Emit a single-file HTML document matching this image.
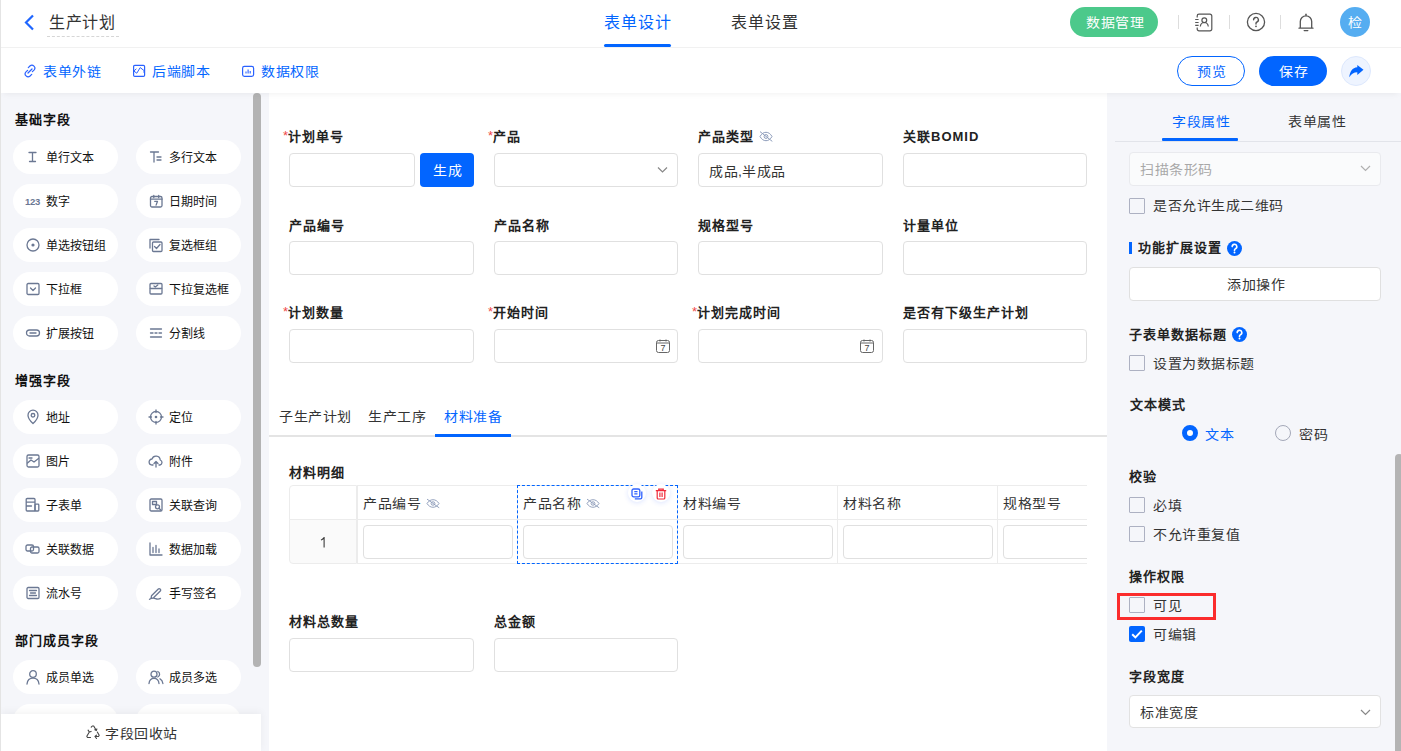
<!DOCTYPE html>
<html lang="zh-CN">
<head>
<meta charset="utf-8">
<title>生产计划 - 表单设计</title>
<style>
*{box-sizing:border-box;margin:0;padding:0}
html,body{width:1401px;height:751px;overflow:hidden;background:#fff}
body{font-family:"Liberation Sans",sans-serif;color:#333;position:relative;font-size:14px}
.abs{position:absolute}
.abs>svg{display:block}
.txt{position:absolute;white-space:nowrap;line-height:1}
/* header */
#leftline{position:absolute;left:0;top:0;width:1px;height:751px;background:#e4e4e4;z-index:50}
#hdr{position:absolute;left:0;top:0;width:1401px;height:48px;border-bottom:1px solid #f1f1f1;background:#fff}
#bar2{position:absolute;left:0;top:48px;width:1401px;height:45px;background:#fff;z-index:5;box-shadow:0 4px 6px -3px rgba(0,0,0,.06)}
.blue{color:#0265ff}
/* left panel */
#lp{position:absolute;left:0;top:93px;width:269px;height:658px;background:#f5f6fa;overflow:hidden}
.sec{position:absolute;left:15px;font-size:13px;letter-spacing:1px;font-weight:bold;color:#111;line-height:1}
.pill{position:absolute;width:105px;height:34px;border-radius:17px;background:#fff}
.pill .ic{position:absolute;left:12px;top:9px;width:16px;height:16px}
.pill .t{position:absolute;left:33px;top:12px;font-size:12px;line-height:12px;color:#111;white-space:nowrap}
#lscroll{position:absolute;left:253px;top:0;width:8px;height:574px;border-radius:4px;background:#b3b3b3}
#recycle{position:absolute;left:1px;top:621px;width:260px;height:37px;background:#fff;box-shadow:0 -2px 8px rgba(0,0,0,.05)}
/* canvas */
#cv{position:absolute;left:269px;top:93px;width:838px;height:658px;background:#fff;overflow:hidden}
.lbl{position:absolute;font-size:13px;letter-spacing:1px;font-weight:bold;color:#222;line-height:1;white-space:nowrap}
.lbl .req{color:#f04848;font-weight:normal;font-size:13px;letter-spacing:1px;letter-spacing:0;position:relative;top:-1px}
.inp{position:absolute;height:34px;border:1px solid #e0e0e0;border-radius:4px;background:#fff}
/* right panel */
#rp{position:absolute;left:1107px;top:93px;width:294px;height:658px;background:#f5f6fa;overflow:hidden}
.rsec{position:absolute;left:22px;font-size:13px;letter-spacing:1px;font-weight:bold;color:#222;line-height:1;white-space:nowrap}
.cb{position:absolute;left:22px;width:16px;height:16px;border:1px solid #c8c8c8;border-radius:2px;background:#fff}
.cbt{position:absolute;left:46px;font-size:13px;letter-spacing:1px;color:#333;line-height:1;white-space:nowrap}
</style>
</head>
<body>
<div id="leftline"></div>

<!-- ===== Header ===== -->
<div id="hdr">
  <svg class="abs" style="left:23px;top:14px" width="12" height="17" viewBox="0 0 12 17"><path d="M10 1.5 L3 8.5 L10 15.5" fill="none" stroke="#1f66ff" stroke-width="2.2"/></svg>
  <div class="txt" style="left:49px;top:15px;font-size:16px;color:#333;letter-spacing:.6px">生产计划</div>
  <div class="abs" style="left:47px;top:36px;width:72px;border-top:1px dashed #d6d6d6"></div>

  <div class="txt" style="left:604px;top:15px;font-size:16px;color:#0265ff;letter-spacing:1px">表单设计</div>
  <div class="abs" style="left:604px;top:44px;width:67px;height:3px;border-radius:2px;background:#0265ff"></div>
  <div class="txt" style="left:731px;top:15px;font-size:16px;color:#333;letter-spacing:1px">表单设置</div>

  <div class="abs" style="left:1070px;top:7px;width:88px;height:30px;border-radius:15px;background:#4cc98b"></div>
  <div class="txt" style="left:1086px;top:15px;font-size:14px;letter-spacing:.5px;transform:scaleY(.9);transform-origin:0 50%;color:#fff;font-weight:500">数据管理</div>
  <div class="abs" style="left:1178px;top:15px;width:1px;height:14px;background:#ddd"></div>
  <div class="abs" style="left:1229px;top:15px;width:1px;height:14px;background:#ddd"></div>
  <div class="abs" style="left:1280px;top:15px;width:1px;height:14px;background:#ddd"></div>
  <svg class="abs" style="left:1194px;top:13px" width="20" height="19" viewBox="0 0 20 19"><path d="M3.2 4.5V3a1.8 1.8 0 0 1 1.8-1.8h11a1.8 1.8 0 0 1 1.8 1.8v13a1.8 1.8 0 0 1-1.8 1.8H5a1.8 1.8 0 0 1-1.8-1.8v-1.5" fill="none" stroke="#555" stroke-width="1.2"/><path d="M1.2 6.5h3.4M1.2 9.5h3.4M1.2 12.3h3.4" stroke="#555" stroke-width="1.2"/><circle cx="10.3" cy="7.3" r="2.4" fill="none" stroke="#555" stroke-width="1.2"/><path d="M6.3 13.5c.3-2.5 1.9-4 4-4s3.7 1.5 4 4" fill="none" stroke="#555" stroke-width="1.2"/></svg>
  <svg class="abs" style="left:1246px;top:12px" width="20" height="20" viewBox="0 0 20 20"><circle cx="10" cy="10" r="8.6" fill="none" stroke="#555" stroke-width="1.3"/><path d="M7.6 7.8a2.4 2.4 0 1 1 3.4 2.2c-.7.3-1 .8-1 1.5v.6" fill="none" stroke="#555" stroke-width="1.4" stroke-linecap="round"/><circle cx="10" cy="14.3" r=".9" fill="#555"/></svg>
  <svg class="abs" style="left:1298px;top:13px" width="16" height="19" viewBox="0 0 16 19"><path d="M8 1.2v1" stroke="#555" stroke-width="1.4" stroke-linecap="round"/><path d="M2.3 15V8.5a5.7 5.7 0 0 1 11.4 0V15M1 15.2h14" fill="none" stroke="#555" stroke-width="1.3" stroke-linecap="round"/><path d="M6.2 17.6h3.6" stroke="#555" stroke-width="1.4" stroke-linecap="round"/></svg>
  <div class="abs" style="left:1340px;top:7px;width:30px;height:30px;border-radius:15px;background:#55adf1"></div>
  <div class="txt" style="left:1348px;top:15px;font-size:14px;letter-spacing:.5px;transform:scaleY(.9);transform-origin:0 50%;color:#fff">检</div>
</div>

<!-- ===== Toolbar 2 ===== -->
<div id="bar2">
  <svg class="abs" style="left:23px;top:16px" width="14" height="14" viewBox="0 0 14 14"><path d="M5.3 3.6l1.6-1.6a2.9 2.9 0 0 1 4.1 4.1L9.4 7.7M8.7 10.4l-1.6 1.6a2.9 2.9 0 0 1-4.1-4.1l1.6-1.6M5 9l4-4" fill="none" stroke="#2a62ff" stroke-width="1.2" stroke-linecap="round"/></svg>
  <svg class="abs" style="left:132px;top:16px" width="14" height="14" viewBox="0 0 14 14"><rect x="1.6" y="1.4" width="11" height="11" rx="1.2" fill="none" stroke="#2a62ff" stroke-width="1.2"/><path d="M1.8 7l2.6-2.2M1.8 7l3 2.2 3.4-5.6 4.4 3.4-1.5 1.3" fill="none" stroke="#2a62ff" stroke-width="1"/></svg>
  <svg class="abs" style="left:241px;top:16px" width="14" height="14" viewBox="0 0 14 14"><rect x="1.6" y="2.4" width="11" height="10" rx="1.8" fill="none" stroke="#2a62ff" stroke-width="1.2"/><path d="M5 7.6v2M7.1 5.5v4.1M9.2 7v2.6" stroke="#2a62ff" stroke-width="1.1"/></svg>
  <div class="txt blue" style="left:43px;top:17px;font-size:14px;letter-spacing:.5px;transform:scaleY(.9);transform-origin:0 50%">表单外链</div>
  <div class="txt blue" style="left:152px;top:17px;font-size:14px;letter-spacing:.5px;transform:scaleY(.9);transform-origin:0 50%">后端脚本</div>
  <div class="txt blue" style="left:261px;top:17px;font-size:14px;letter-spacing:.5px;transform:scaleY(.9);transform-origin:0 50%">数据权限</div>

  <div class="abs" style="left:1177px;top:8px;width:68px;height:30px;border-radius:15px;border:1px solid #0265ff"></div>
  <div class="txt blue" style="left:1197px;top:17px;font-size:14px;letter-spacing:.5px;transform:scaleY(.9);transform-origin:0 50%">预览</div>
  <div class="abs" style="left:1259px;top:8px;width:68px;height:30px;border-radius:15px;background:#0265ff"></div>
  <div class="txt" style="left:1279px;top:17px;font-size:14px;letter-spacing:.5px;transform:scaleY(.9);transform-origin:0 50%;color:#fff;font-weight:500">保存</div>
  <div class="abs" style="left:1341px;top:8px;width:30px;height:30px;border-radius:15px;background:#eef4ff;border:1px solid #dde8fd"></div>
  <svg class="abs" style="left:1349px;top:17px" width="15" height="13" viewBox="0 0 15 13"><path d="M8.3 0L14.5 4.8 8.3 10V7.3C4.8 7.3 2.4 9 0.3 12.2 0.7 6.6 3.4 2.6 8.3 2.2z" fill="#0265ff"/></svg>
</div>

<!-- ===== Left panel ===== -->
<div id="lp">
  <div class="sec" style="top:20px">基础字段</div>
  <div class="sec" style="top:281px">增强字段</div>
  <div class="sec" style="top:541px">部门成员字段</div>
  <div class="pill" style="left:13px;top:47px"><svg class="ic" viewBox="0 0 16 16"><path d="M4 3.5h7M7.5 3.5v9M4.5 12.5h6" fill="none" stroke="#6b7893" stroke-width="1.3" stroke-linecap="round" stroke-linejoin="round"/></svg><span class="t">单行文本</span></div>
  <div class="pill" style="left:136px;top:47px"><svg class="ic" viewBox="0 0 16 16"><path d="M2.5 3h8M6 3v10M9 8h4M9 11h4" fill="none" stroke="#6b7893" stroke-width="1.3" stroke-linecap="round" stroke-linejoin="round"/></svg><span class="t">多行文本</span></div>
  <div class="pill" style="left:13px;top:91px"><svg class="ic" viewBox="0 0 16 16"><text x="0" y="11.5" font-family="Liberation Sans" font-weight="bold" font-size="9.5" letter-spacing="-0.3" fill="#6b7893">123</text></svg><span class="t">数字</span></div>
  <div class="pill" style="left:136px;top:91px"><svg class="ic" viewBox="0 0 16 16"><rect x="2.5" y="3.5" width="11.5" height="10.5" rx="1.5" fill="none" stroke="#6b7893" stroke-width="1.3" stroke-linecap="round" stroke-linejoin="round"/><path d="M2.5 6.2h11.5M5.8 2.5v2M10.7 2.5v2M6.7 8.3h2.8l-1.4 3.8" fill="none" stroke="#6b7893" stroke-width="1.3" stroke-linecap="round" stroke-linejoin="round"/></svg><span class="t">日期时间</span></div>
  <div class="pill" style="left:13px;top:135px"><svg class="ic" viewBox="0 0 16 16"><circle cx="8" cy="8" r="6" fill="none" stroke="#6b7893" stroke-width="1.3" stroke-linecap="round" stroke-linejoin="round"/><circle cx="8" cy="8" r="1.6" fill="#6b7893"/></svg><span class="t">单选按钮组</span></div>
  <div class="pill" style="left:136px;top:135px"><svg class="ic" viewBox="0 0 16 16"><path d="M2 11V2.5h9" fill="none" stroke="#6b7893" stroke-width="1.3" stroke-linecap="round" stroke-linejoin="round"/><rect x="4.5" y="5" width="9.5" height="9.5" rx="1" fill="none" stroke="#6b7893" stroke-width="1.3" stroke-linecap="round" stroke-linejoin="round"/><path d="M6.5 9.5l2 2 3.5-4" fill="none" stroke="#6b7893" stroke-width="1.3" stroke-linecap="round" stroke-linejoin="round"/></svg><span class="t">复选框组</span></div>
  <div class="pill" style="left:13px;top:179px"><svg class="ic" viewBox="0 0 16 16"><rect x="2" y="2.5" width="12" height="11" rx="1.2" fill="none" stroke="#6b7893" stroke-width="1.3" stroke-linecap="round" stroke-linejoin="round"/><path d="M5.5 7l2.5 2.5 2.5-2.5" fill="none" stroke="#6b7893" stroke-width="1.3" stroke-linecap="round" stroke-linejoin="round"/></svg><span class="t">下拉框</span></div>
  <div class="pill" style="left:136px;top:179px"><svg class="ic" viewBox="0 0 16 16"><rect x="2" y="2.5" width="12" height="5" rx="1" fill="none" stroke="#6b7893" stroke-width="1.3" stroke-linecap="round" stroke-linejoin="round"/><path d="M2 7.5v4.5a1 1 0 0 0 1 1h10a1 1 0 0 0 1-1V7.5M6 5l1.3 1 2.5-2" fill="none" stroke="#6b7893" stroke-width="1.3" stroke-linecap="round" stroke-linejoin="round"/></svg><span class="t">下拉复选框</span></div>
  <div class="pill" style="left:13px;top:223px"><svg class="ic" viewBox="0 0 16 16"><rect x="1.5" y="5" width="13" height="6" rx="3" fill="none" stroke="#6b7893" stroke-width="1.3" stroke-linecap="round" stroke-linejoin="round"/><path d="M5 8h6" fill="none" stroke="#6b7893" stroke-width="1.3" stroke-linecap="round" stroke-linejoin="round"/></svg><span class="t">扩展按钮</span></div>
  <div class="pill" style="left:136px;top:223px"><svg class="ic" viewBox="0 0 16 16"><path d="M2.5 4h11M2.5 8h2.5M7 8h2M11 8h2.5M2.5 12h11" fill="none" stroke="#6b7893" stroke-width="1.3" stroke-linecap="round" stroke-linejoin="round"/></svg><span class="t">分割线</span></div>
  <div class="pill" style="left:13px;top:307px"><svg class="ic" viewBox="0 0 16 16"><path d="M8 14.5s5-4.6 5-8.3a5 5 0 0 0-10 0c0 3.7 5 8.3 5 8.3z" fill="none" stroke="#6b7893" stroke-width="1.3" stroke-linecap="round" stroke-linejoin="round"/><circle cx="8" cy="6.3" r="1.8" fill="none" stroke="#6b7893" stroke-width="1.3" stroke-linecap="round" stroke-linejoin="round"/></svg><span class="t">地址</span></div>
  <div class="pill" style="left:136px;top:307px"><svg class="ic" viewBox="0 0 16 16"><circle cx="8" cy="8" r="5.5" fill="none" stroke="#6b7893" stroke-width="1.3" stroke-linecap="round" stroke-linejoin="round"/><circle cx="8" cy="8" r="1.3" fill="#6b7893"/><path d="M8 1v2.5M8 12.5V15M1 8h2.5M12.5 8H15" fill="none" stroke="#6b7893" stroke-width="1.3" stroke-linecap="round" stroke-linejoin="round"/></svg><span class="t">定位</span></div>
  <div class="pill" style="left:13px;top:351px"><svg class="ic" viewBox="0 0 16 16"><rect x="2" y="2" width="12" height="12" rx="1.5" fill="none" stroke="#6b7893" stroke-width="1.3" stroke-linecap="round" stroke-linejoin="round"/><path d="M2.5 10l3.5-3 3 2 4.5-3.5M4 5h3" fill="none" stroke="#6b7893" stroke-width="1.3" stroke-linecap="round" stroke-linejoin="round"/></svg><span class="t">图片</span></div>
  <div class="pill" style="left:136px;top:351px"><svg class="ic" viewBox="0 0 16 16"><path d="M5 12H4.2a3 3 0 0 1-.2-6 4.2 4.2 0 0 1 8.2 1A2.6 2.6 0 0 1 12 12h-1M8 14V8.5M6 10.5l2-2 2 2" fill="none" stroke="#6b7893" stroke-width="1.3" stroke-linecap="round" stroke-linejoin="round"/></svg><span class="t">附件</span></div>
  <div class="pill" style="left:13px;top:395px"><svg class="ic" viewBox="0 0 16 16"><path d="M10 14H2.2a1 1 0 0 1-1-1V2.5a1 1 0 0 1 1-1H9a1 1 0 0 1 1 1V14M1.5 5.2h8.2M1.5 9h5" fill="none" stroke="#6b7893" stroke-width="1.3" stroke-linecap="round" stroke-linejoin="round"/><rect x="10" y="7.2" width="3.8" height="6.8" rx=".8" fill="none" stroke="#6b7893" stroke-width="1.3" stroke-linecap="round" stroke-linejoin="round"/></svg><span class="t">子表单</span></div>
  <div class="pill" style="left:136px;top:395px"><svg class="ic" viewBox="0 0 16 16"><rect x="2" y="2" width="12" height="12" rx="1.2" fill="none" stroke="#6b7893" stroke-width="1.3" stroke-linecap="round" stroke-linejoin="round"/><path d="M4.5 4.5h4v3h-4z" fill="none" stroke="#6b7893" stroke-width="1.3" stroke-linecap="round" stroke-linejoin="round"/><circle cx="9.5" cy="9.8" r="2" fill="none" stroke="#6b7893" stroke-width="1.3" stroke-linecap="round" stroke-linejoin="round"/><path d="M11 11.3l2 2" fill="none" stroke="#6b7893" stroke-width="1.3" stroke-linecap="round" stroke-linejoin="round"/></svg><span class="t">关联查询</span></div>
  <div class="pill" style="left:13px;top:439px"><svg class="ic" viewBox="0 0 16 16"><rect x="1" y="4" width="7.5" height="6" rx="1.5" fill="none" stroke="#6b7893" stroke-width="1.3" stroke-linecap="round" stroke-linejoin="round"/><rect x="5.5" y="6" width="8.5" height="6" rx="1.5" fill="none" stroke="#6b7893" stroke-width="1.3" stroke-linecap="round" stroke-linejoin="round"/></svg><span class="t">关联数据</span></div>
  <div class="pill" style="left:136px;top:439px"><svg class="ic" viewBox="0 0 16 16"><path d="M2 2v12h12M5 6.5v5M8 4.5v7M11 8v3.5" fill="none" stroke="#6b7893" stroke-width="1.3" stroke-linecap="round" stroke-linejoin="round"/></svg><span class="t">数据加载</span></div>
  <div class="pill" style="left:13px;top:483px"><svg class="ic" viewBox="0 0 16 16"><rect x="2" y="2.5" width="12" height="11" rx="1.2" fill="none" stroke="#6b7893" stroke-width="1.3" stroke-linecap="round" stroke-linejoin="round"/><path d="M4.5 5.5h7M5.5 8h5M4.5 10.5h7" fill="none" stroke="#6b7893" stroke-width="1.3" stroke-linecap="round" stroke-linejoin="round"/></svg><span class="t">流水号</span></div>
  <div class="pill" style="left:136px;top:483px"><svg class="ic" viewBox="0 0 16 16"><path d="M3.5 10.8l6.8-6.8a1.2 1.2 0 0 1 1.7 0l.3.3a1.2 1.2 0 0 1 0 1.7L5.5 12.8 3 13.3zM1.5 14.3c2-1.2 4-1.5 6-.7s3.5.6 5-.2" fill="none" stroke="#6b7893" stroke-width="1.3" stroke-linecap="round" stroke-linejoin="round"/></svg><span class="t">手写签名</span></div>
  <div class="pill" style="left:13px;top:567px"><svg class="ic" viewBox="0 0 16 16"><circle cx="8" cy="5" r="3.3" fill="none" stroke="#6b7893" stroke-width="1.3" stroke-linecap="round" stroke-linejoin="round"/><path d="M2 15c.4-3.6 2.8-5.8 6-5.8s5.6 2.2 6 5.8" fill="none" stroke="#6b7893" stroke-width="1.3" stroke-linecap="round" stroke-linejoin="round"/></svg><span class="t">成员单选</span></div>
  <div class="pill" style="left:136px;top:567px"><svg class="ic" viewBox="0 0 16 16"><circle cx="6" cy="5.2" r="3" fill="none" stroke="#6b7893" stroke-width="1.3" stroke-linecap="round" stroke-linejoin="round"/><path d="M1 14.5c.3-3.2 2.3-5.2 5-5.2s4.7 2 5 5.2M9.8 2.5a3 3 0 0 1 0 5.5M12 9.8c1.6.8 2.6 2.5 2.9 4.7" fill="none" stroke="#6b7893" stroke-width="1.3" stroke-linecap="round" stroke-linejoin="round"/></svg><span class="t">成员多选</span></div>
  <div class="pill" style="left:13px;top:611px"></div>
  <div class="pill" style="left:136px;top:611px"></div>
  <div id="lscroll"></div>
  <div id="recycle"><svg class="abs" style="left:84px;top:11px" width="16" height="15" viewBox="0 0 16 15"><path d="M6.2 2.2L7.3 1h1.4l2.6 4.5M12.3 7l1.9 3.3-.7 1.2H10M5.5 12.5H2.5l-.7-1.2L4.3 7M9.8 4.8l1.5.7.6-1.6M11.5 13.5l-1.5-2 1.5-1.3M3.1 5.1l1.2 1.9 1.8-.6" fill="none" stroke="#444" stroke-width="1.1" stroke-linecap="round" stroke-linejoin="round"/></svg><span class="txt" style="left:104px;top:12px;font-size:14px;letter-spacing:.5px;transform:scaleY(.9);transform-origin:0 50%;color:#333">字段回收站</span></div>
</div>

<!-- ===== Canvas ===== -->
<div id="cv">
  <div class="lbl" style="left:14px;top:37px"><span class="req">*</span>计划单号</div>
  <div class="lbl" style="left:219px;top:37px"><span class="req">*</span>产品</div>
  <div class="lbl" style="left:429px;top:37px">产品类型<span style="display:inline-block;margin-left:5px;vertical-align:-1px"><svg width="14" height="11" viewBox="0 0 14 11"><path d="M1 5.5C2.6 2.7 4.6 1.3 7 1.3s4.4 1.4 6 4.2c-1.6 2.8-3.6 4.2-6 4.2S2.6 8.3 1 5.5z" fill="none" stroke="#8e9dbb" stroke-width="1"/><circle cx="7" cy="5.5" r="1.9" fill="none" stroke="#8e9dbb" stroke-width="1"/><path d="M1 0.6l12.3 9.8" stroke="#8e9dbb" stroke-width="1"/></svg></span></div>
  <div class="lbl" style="left:634px;top:37px">关联BOMID</div>
  <div class="lbl" style="left:20px;top:126px">产品编号</div>
  <div class="lbl" style="left:225px;top:126px">产品名称</div>
  <div class="lbl" style="left:429px;top:126px">规格型号</div>
  <div class="lbl" style="left:634px;top:126px">计量单位</div>
  <div class="lbl" style="left:14px;top:213px"><span class="req">*</span>计划数量</div>
  <div class="lbl" style="left:219px;top:213px"><span class="req">*</span>开始时间</div>
  <div class="lbl" style="left:423px;top:213px"><span class="req">*</span>计划完成时间</div>
  <div class="lbl" style="left:634px;top:213px">是否有下级生产计划</div>
  <div class="inp" style="left:20px;top:60px;width:126px"></div>
  <div class="abs" style="left:151px;top:60px;width:54px;height:34px;border-radius:4px;background:#0265ff"></div>
  <div class="txt" style="left:164px;top:71px;font-size:14px;letter-spacing:.5px;transform:scaleY(.9);transform-origin:0 50%;color:#fff">生成</div>
  <div class="inp" style="left:225px;top:60px;width:184px"></div>
  <svg class="abs" style="left:388px;top:73px" width="11" height="8" viewBox="0 0 11 8"><path d="M1 1.5l4.5 4.5 4.5-4.5" fill="none" stroke="#888" stroke-width="1.2"/></svg>
  <div class="inp" style="left:429px;top:60px;width:185px"></div>
  <div class="txt" style="left:440px;top:72px;font-size:14px;letter-spacing:.5px;transform:scaleY(.9);transform-origin:0 50%;color:#333">成品,半成品</div>
  <div class="inp" style="left:634px;top:60px;width:184px"></div>
  <div class="inp" style="left:20px;top:148px;width:185px"></div>
  <div class="inp" style="left:225px;top:148px;width:184px"></div>
  <div class="inp" style="left:429px;top:148px;width:185px"></div>
  <div class="inp" style="left:634px;top:148px;width:184px"></div>
  <div class="inp" style="left:20px;top:236px;width:185px"></div>
  <div class="inp" style="left:225px;top:236px;width:184px"></div>
  <div class="abs" style="left:387px;top:246px;width:14px;height:14px"><svg width="14" height="14" viewBox="0 0 14 14"><rect x="0.5" y="1.5" width="13" height="12" rx="2" fill="none" stroke="#666" stroke-width="1"/><path d="M0.5 4h13M4 0.5v2M10 0.5v2" stroke="#666" stroke-width="1"/><text x="7" y="12" text-anchor="middle" font-family="Liberation Sans" font-size="9" fill="#444">7</text></svg></div>
  <div class="inp" style="left:429px;top:236px;width:185px"></div>
  <div class="abs" style="left:591px;top:246px;width:14px;height:14px"><svg width="14" height="14" viewBox="0 0 14 14"><rect x="0.5" y="1.5" width="13" height="12" rx="2" fill="none" stroke="#666" stroke-width="1"/><path d="M0.5 4h13M4 0.5v2M10 0.5v2" stroke="#666" stroke-width="1"/><text x="7" y="12" text-anchor="middle" font-family="Liberation Sans" font-size="9" fill="#444">7</text></svg></div>
  <div class="inp" style="left:634px;top:236px;width:184px"></div>
  <div class="txt" style="left:10px;top:316px;font-size:14px;letter-spacing:.5px;transform:scaleY(.9);transform-origin:0 50%;color:#333">子生产计划</div>
  <div class="txt" style="left:99px;top:316px;font-size:14px;letter-spacing:.5px;transform:scaleY(.9);transform-origin:0 50%;color:#333">生产工序</div>
  <div class="txt" style="left:175px;top:316px;font-size:14px;letter-spacing:.5px;transform:scaleY(.9);transform-origin:0 50%;color:#0265ff">材料准备</div>
  <div class="abs" style="left:0;top:342px;width:838px;height:2px;background:#e4e4e4"></div>
  <div class="abs" style="left:166px;top:341px;width:76px;height:3px;background:#0265ff"></div>
  <div class="lbl" style="left:20px;top:373px">材料明细</div>
  <div class="abs" style="left:20px;top:392px;width:798px;height:79px;overflow:hidden"><div class="abs" style="left:0;top:0;width:68px;height:35px;border:1px solid #ececec;border-radius:4px 0 0 0"></div><div class="abs" style="left:0;top:34px;width:68px;height:45px;border:1px solid #ececec;background:#fafafa;border-radius:0 0 0 4px"></div><svg class="abs" style="left:31px;top:52px" width="6" height="11" viewBox="0 0 6 11"><path d="M1 3.1C2.2 2.5 3.3 1.7 4.1 0.6V10.5" fill="none" stroke="#333" stroke-width="1.05"/></svg><div class="abs" style="left:68px;top:0;width:161px;height:35px;border:1px solid #ececec"></div><div class="abs" style="left:68px;top:34px;width:161px;height:45px;border:1px solid #ececec"></div><div class="txt" style="left:74px;top:11px;font-size:14px;letter-spacing:.5px;transform:scaleY(.9);transform-origin:0 50%;color:#333">产品编号<span style="display:inline-block;margin-left:5px;vertical-align:-1px"><svg width="14" height="11" viewBox="0 0 14 11"><path d="M1 5.5C2.6 2.7 4.6 1.3 7 1.3s4.4 1.4 6 4.2c-1.6 2.8-3.6 4.2-6 4.2S2.6 8.3 1 5.5z" fill="none" stroke="#8e9dbb" stroke-width="1"/><circle cx="7" cy="5.5" r="1.9" fill="none" stroke="#8e9dbb" stroke-width="1"/><path d="M1 0.6l12.3 9.8" stroke="#8e9dbb" stroke-width="1"/></svg></span></div><div class="inp" style="left:74px;top:40px;width:150px"></div><div class="abs" style="left:228px;top:0;width:161px;height:35px;border:1px solid #ececec"></div><div class="abs" style="left:228px;top:34px;width:161px;height:45px;border:1px solid #ececec"></div><div class="txt" style="left:234px;top:11px;font-size:14px;letter-spacing:.5px;transform:scaleY(.9);transform-origin:0 50%;color:#333">产品名称<span style="display:inline-block;margin-left:5px;vertical-align:-1px"><svg width="14" height="11" viewBox="0 0 14 11"><path d="M1 5.5C2.6 2.7 4.6 1.3 7 1.3s4.4 1.4 6 4.2c-1.6 2.8-3.6 4.2-6 4.2S2.6 8.3 1 5.5z" fill="none" stroke="#8e9dbb" stroke-width="1"/><circle cx="7" cy="5.5" r="1.9" fill="none" stroke="#8e9dbb" stroke-width="1"/><path d="M1 0.6l12.3 9.8" stroke="#8e9dbb" stroke-width="1"/></svg></span></div><div class="inp" style="left:234px;top:40px;width:150px"></div><div class="abs" style="left:388px;top:0;width:161px;height:35px;border:1px solid #ececec"></div><div class="abs" style="left:388px;top:34px;width:161px;height:45px;border:1px solid #ececec"></div><div class="txt" style="left:394px;top:11px;font-size:14px;letter-spacing:.5px;transform:scaleY(.9);transform-origin:0 50%;color:#333">材料编号</div><div class="inp" style="left:394px;top:40px;width:150px"></div><div class="abs" style="left:548px;top:0;width:161px;height:35px;border:1px solid #ececec"></div><div class="abs" style="left:548px;top:34px;width:161px;height:45px;border:1px solid #ececec"></div><div class="txt" style="left:554px;top:11px;font-size:14px;letter-spacing:.5px;transform:scaleY(.9);transform-origin:0 50%;color:#333">材料名称</div><div class="inp" style="left:554px;top:40px;width:150px"></div><div class="abs" style="left:708px;top:0;width:161px;height:35px;border:1px solid #ececec"></div><div class="abs" style="left:708px;top:34px;width:161px;height:45px;border:1px solid #ececec"></div><div class="txt" style="left:714px;top:11px;font-size:14px;letter-spacing:.5px;transform:scaleY(.9);transform-origin:0 50%;color:#333">规格型号</div><div class="inp" style="left:714px;top:40px;width:150px"></div></div>
  <div class="abs" style="left:248px;top:392px;width:161px;height:79px;border:1px dashed #0265ff"></div>
  <div class="abs" style="left:359px;top:391px;width:18px;height:18px;border-radius:9px;background:#fff;box-shadow:0 1px 5px rgba(40,90,255,.16)"><div class="abs" style="left:3px;top:4px"><svg width="12" height="12" viewBox="0 0 12 12"><rect x="1" y="1" width="7.8" height="7.8" rx="1.6" fill="none" stroke="#2f62ff" stroke-width="1.3"/><path d="M3.3 3.6h3.2M3.3 5.9h3.2" stroke="#2f62ff" stroke-width="1.2"/><path d="M10.8 3.6v5.8a1.4 1.4 0 0 1-1.4 1.4H3.8" fill="none" stroke="#2f62ff" stroke-width="1.3"/></svg></div></div>
  <div class="abs" style="left:383px;top:391px;width:18px;height:18px;border-radius:9px;background:#fff;box-shadow:0 1px 5px rgba(40,90,255,.16)"><div class="abs" style="left:3px;top:4px"><svg width="12" height="12" viewBox="0 0 12 12"><path d="M0.8 2.6h10.4M3.8 2.6V1.2h4.4v1.4" fill="none" stroke="#f0283a" stroke-width="1.3"/><path d="M2.2 2.8v7.2a1 1 0 0 0 1 1h5.6a1 1 0 0 0 1-1V2.8M4.9 4.6v4.4M7.1 4.6v4.4" fill="none" stroke="#f0283a" stroke-width="1.2"/></svg></div></div>
  <div class="lbl" style="left:20px;top:522px">材料总数量</div>
  <div class="lbl" style="left:225px;top:522px">总金额</div>
  <div class="inp" style="left:20px;top:545px;width:185px"></div>
  <div class="inp" style="left:225px;top:545px;width:184px"></div>
</div>

<!-- ===== Right panel ===== -->
<div id="rp">
  <div class="txt" style="left:65px;top:22px;font-size:14px;letter-spacing:.5px;transform:scaleY(.9);transform-origin:0 50%;color:#0265ff">字段属性</div>
  <div class="txt" style="left:181px;top:22px;font-size:14px;letter-spacing:.5px;transform:scaleY(.9);transform-origin:0 50%;color:#333">表单属性</div>
  <div class="abs" style="left:8px;top:48px;width:290px;height:1px;background:#e2e4ea"></div>
  <div class="abs" style="left:55px;top:45px;width:76px;height:3px;border-radius:1px;background:#0265ff"></div>
  <div class="abs" style="left:22px;top:59px;width:252px;height:34px;border:1px solid #e9eaee;border-radius:4px;background:#fafbfc"></div>
  <div class="txt" style="left:33px;top:70px;font-size:14px;letter-spacing:.5px;transform:scaleY(.9);transform-origin:0 50%;color:#a8a8a8">扫描条形码</div>
  <div class="abs" style="left:253px;top:72px"><svg width="11" height="7" viewBox="0 0 11 7"><path d="M1 1l4.5 4.5L10 1" fill="none" stroke="#b0b0b0" stroke-width="1.2"/></svg></div>
  <div class="abs" style="left:22px;top:105px;width:16px;height:16px;border:1px solid #adb1c2;border-radius:1px;background:transparent"></div>
  <div class="txt" style="left:46px;top:106px;font-size:14px;letter-spacing:.5px;transform:scaleY(.9);transform-origin:0 50%;color:#333">是否允许生成二维码</div>
  <div class="abs" style="left:22px;top:149px;width:3px;height:12px;background:#0265ff"></div>
  <div class="rsec" style="left:31px;top:148px">功能扩展设置</div>
  <div class="abs" style="left:120px;top:148px"><svg width="15" height="15" viewBox="0 0 15 15"><circle cx="7.5" cy="7.5" r="7.5" fill="#0265ff"/><path d="M5.2 5.6a2.3 2.3 0 1 1 3.3 2.1c-.6.3-1 .7-1 1.4v.4" fill="none" stroke="#fff" stroke-width="1.6" stroke-linecap="round"/><circle cx="7.5" cy="11.6" r="1" fill="#fff"/></svg></div>
  <div class="abs" style="left:22px;top:174px;width:252px;height:34px;border:1px solid #e0e0e0;border-radius:4px;background:#fff"></div>
  <div class="txt" style="left:120px;top:184px;font-size:14px;letter-spacing:.5px;transform:scaleY(.9);transform-origin:0 50%;color:#333">添加操作</div>
  <div class="rsec" style="left:22px;top:235px">子表单数据标题</div>
  <div class="abs" style="left:125px;top:234px"><svg width="15" height="15" viewBox="0 0 15 15"><circle cx="7.5" cy="7.5" r="7.5" fill="#0265ff"/><path d="M5.2 5.6a2.3 2.3 0 1 1 3.3 2.1c-.6.3-1 .7-1 1.4v.4" fill="none" stroke="#fff" stroke-width="1.6" stroke-linecap="round"/><circle cx="7.5" cy="11.6" r="1" fill="#fff"/></svg></div>
  <div class="abs" style="left:22px;top:262px;width:16px;height:16px;border:1px solid #adb1c2;border-radius:1px;background:transparent"></div>
  <div class="txt" style="left:46px;top:263px;font-size:14px;letter-spacing:.5px;transform:scaleY(.9);transform-origin:0 50%;color:#333">设置为数据标题</div>
  <div class="rsec" style="left:23px;top:305px">文本模式</div>
  <div class="abs" style="left:75px;top:332px;width:16px;height:16px;border-radius:8px;border:5px solid #0265ff;background:#fff"></div>
  <div class="txt" style="left:98px;top:334px;font-size:14px;letter-spacing:.5px;transform:scaleY(.9);transform-origin:0 50%;color:#0265ff">文本</div>
  <div class="abs" style="left:168px;top:332px;width:16px;height:16px;border-radius:8px;border:1px solid #a4a8b8;background:transparent"></div>
  <div class="txt" style="left:192px;top:334px;font-size:14px;letter-spacing:.5px;transform:scaleY(.9);transform-origin:0 50%;color:#333">密码</div>
  <div class="rsec" style="left:22px;top:377px">校验</div>
  <div class="abs" style="left:22px;top:404px;width:16px;height:16px;border:1px solid #adb1c2;border-radius:1px;background:transparent"></div>
  <div class="txt" style="left:46px;top:405px;font-size:14px;letter-spacing:.5px;transform:scaleY(.9);transform-origin:0 50%;color:#333">必填</div>
  <div class="abs" style="left:22px;top:433px;width:16px;height:16px;border:1px solid #adb1c2;border-radius:1px;background:transparent"></div>
  <div class="txt" style="left:46px;top:434px;font-size:14px;letter-spacing:.5px;transform:scaleY(.9);transform-origin:0 50%;color:#333">不允许重复值</div>
  <div class="rsec" style="left:22px;top:477px">操作权限</div>
  <div class="abs" style="left:22px;top:504px;width:16px;height:16px;border:1px solid #adb1c2;border-radius:1px;background:transparent"></div>
  <div class="txt" style="left:46px;top:505px;font-size:14px;letter-spacing:.5px;transform:scaleY(.9);transform-origin:0 50%;color:#333">可见</div>
  <div class="abs" style="left:10px;top:500px;width:99px;height:27px;border:3px solid #fb2c2c"></div>
  <div class="abs" style="left:22px;top:533px;width:16px;height:16px;border-radius:2px;background:#0265ff"><svg class="abs" style="left:2px;top:3px" width="12" height="10" viewBox="0 0 12 10"><path d="M1.2 5.2l3.2 3.2 6.4-6.8" fill="none" stroke="#fff" stroke-width="2"/></svg></div>
  <div class="txt" style="left:46px;top:534px;font-size:14px;letter-spacing:.5px;transform:scaleY(.9);transform-origin:0 50%;color:#333">可编辑</div>
  <div class="rsec" style="left:22px;top:577px">字段宽度</div>
  <div class="abs" style="left:22px;top:602px;width:252px;height:33px;border:1px solid #e2e2e2;border-radius:4px;background:#fff"></div>
  <div class="txt" style="left:33px;top:612px;font-size:14px;letter-spacing:.5px;transform:scaleY(.9);transform-origin:0 50%;color:#333">标准宽度</div>
  <div class="abs" style="left:253px;top:616px"><svg width="11" height="7" viewBox="0 0 11 7"><path d="M1 1l4.5 4.5L10 1" fill="none" stroke="#888" stroke-width="1.2"/></svg></div>
  <div class="abs" style="left:288px;top:361px;width:8px;height:320px;border-radius:4px;background:#b4b4b4"></div>
</div>

</body>
</html>
